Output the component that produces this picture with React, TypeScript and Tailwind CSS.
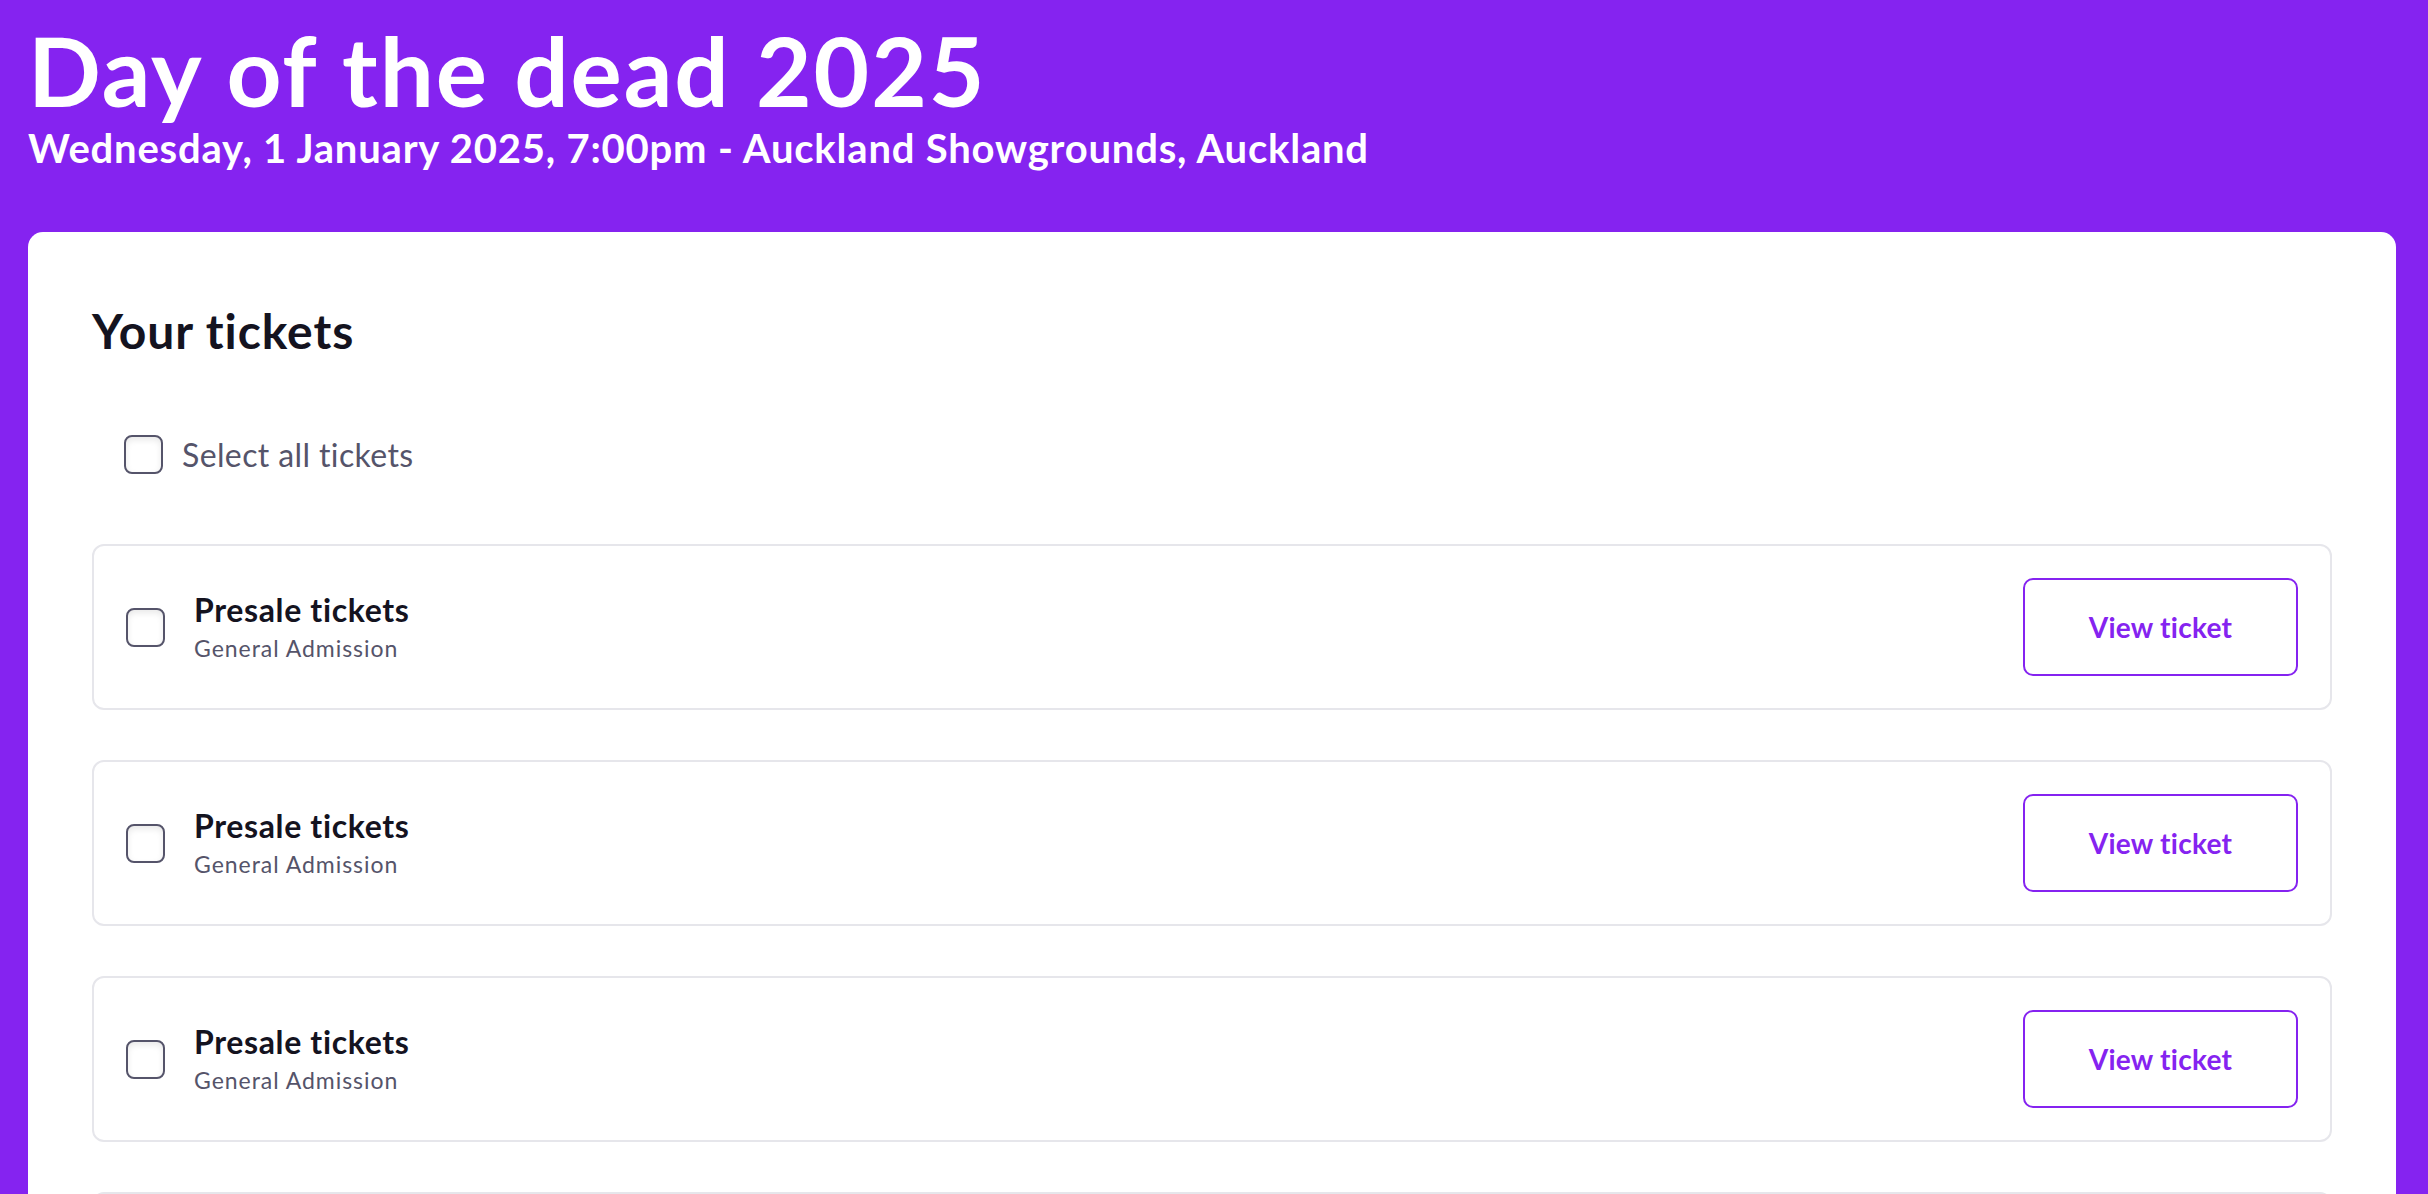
import React from "react";

const tickets = [1, 2, 3, 4];

function Box({ className = "" }: { className?: string }) {
  return (
    <span
      className={`block h-[39px] w-[39px] shrink-0 rounded-[8px] border-2 border-[#55546a] bg-white shadow-[inset_0_3px_6px_rgba(0,0,0,0.09)] ${className}`}
    />
  );
}

export default function App() {
  return (
    <div
      className="min-h-screen bg-[#8523f0] pl-[28px] pr-[32px] [font-variant-ligatures:none]"
      style={{ fontFamily: "Lato, 'Noto Sans', sans-serif" }}
    >
      <header className="pt-[22px] pb-[64px] text-white">
        <h1 className="text-[96px] font-bold leading-none tracking-[0.02em]">Day of the dead 2025</h1>
        <p className="mt-[10px] text-[40px] font-bold leading-none tracking-[0.02em]">
          Wednesday, 1 January 2025, 7:00pm - Auckland Showgrounds, Auckland
        </p>
      </header>

      <main className="rounded-t-[15px] bg-white px-[64px] pt-[75px] pb-[64px]">
        <h2 className="text-[48px] font-bold leading-none tracking-[0.02em] text-[#14131f]">Your tickets</h2>

        <label className="mt-[80px] flex items-center gap-[19px] pl-[32px]">
          <Box />
          <span className="text-[32px] leading-none tracking-[0.012em] text-[#55546a]">Select all tickets</span>
        </label>

        <div className="mt-[70px] flex flex-col gap-[50px]">
          {tickets.map((t) => (
            <div
              key={t}
              className="flex items-center justify-between rounded-[12px] border-2 border-[#e6e6eb] p-[32px]"
            >
              <div className="flex items-center gap-[29px]">
                <Box />
                <div className="flex flex-col gap-[11px]">
                  <span className="text-[32px] font-bold leading-none tracking-[0.02em] text-[#14131f]">
                    Presale tickets
                  </span>
                  <span className="text-[23px] leading-none tracking-[0.042em] text-[#55546a]">General Admission</span>
                </div>
              </div>
              <button className="flex h-[98px] w-[275px] items-center justify-center rounded-[10px] border-2 border-[#8523f0] bg-white text-[28px] font-bold tracking-[0.01em] text-[#8523f0]">
                View ticket
              </button>
            </div>
          ))}
        </div>
      </main>
    </div>
  );
}
